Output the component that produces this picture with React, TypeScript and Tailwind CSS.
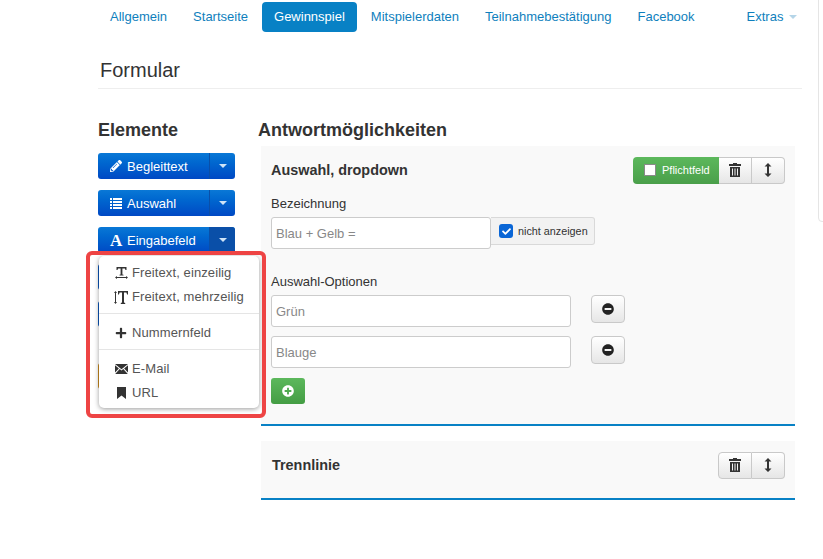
import React from 'react';
import { FaPencilAlt, FaPlus, FaMinusCircle, FaPlusCircle, FaCheck } from 'react-icons/fa';

const tabs = ['Allgemein', 'Startseite', 'Gewinnspiel', 'Mitspielerdaten', 'Teilnahmebestätigung', 'Facebook'];

const Caret = ({ className }: { className: string }) => (
  <span className={`inline-block w-0 h-0 border-x-[4px] border-x-transparent border-t-[4px] ${className}`} />
);

const TrashIcon = () => (
  <svg width="12" height="14" viewBox="0 0 12 14" fill="#333">
    <path d="M4 0h4v1h4v2H0V1h4z" />
    <path d="M1 4h10v10H1zM3 5.5v7h1v-7zM5.5 5.5v7h1v-7zM8 5.5v7h1v-7z" fillRule="evenodd" />
  </svg>
);

const ResizeIcon = () => (
  <svg width="8" height="14" viewBox="0 0 8 14" fill="#333">
    <path d="M4 0l3.5 3.6H5v6.8h2.5L4 14 .5 10.4H3V3.6H.5z" />
  </svg>
);

const MailIcon = () => (
  <svg width="13" height="10" viewBox="0 0 13 10" fill="#333">
    <path d="M0 0h13L6.5 5.2zM0 1.2l3.9 3.2L0 8.6zM13 1.2L9.1 4.4l3.9 4.2zM4.7 5l1.8 1.5L8.3 5l4.5 5H.2z" />
  </svg>
);

const BookmarkIcon = () => (
  <svg width="9" height="12" viewBox="0 0 9 12" fill="#333">
    <path d="M0 0h9v12L4.5 8.4 0 12z" />
  </svg>
);

const ListIcon = () => (
  <svg width="12" height="11" viewBox="0 0 12 11" fill="#fff">
    <path d="M0 0h2v2H0zM3 0h9v2H3zM0 3h2v2H0zM3 3h9v2H3zM0 6h2v2H0zM3 6h9v2H3zM0 9h2v2H0zM3 9h9v2H3z" />
  </svg>
);

const TextWidthIcon = () => (
  <svg width="13" height="12" viewBox="0 0 13 12" fill="#333">
    <path d="M1.5 0h10v3h-1l-.6-1.6H7.4v6l1.1.4V8.6h-4v-.8l1.1-.4v-6H3.1L2.5 3h-1z" />
    <path d="M0 10.5L2 9v1h9V9l2 1.5L11 12v-1H2v1z" />
  </svg>
);

const TextHeightIcon = () => (
  <svg width="14" height="13" viewBox="0 0 14 13" fill="#333">
    <path d="M1.5 0L3 2H2v9h1l-1.5 2L0 11h1V2H0z" />
    <path d="M4 0h10v3.4h-.9l-.7-2H10v10l1.2.5v1.1H6.8v-1.1L8 11.4v-10H5.6l-.7 2H4z" />
  </svg>
);

const SplitButton = ({ icon, label, dark }: { icon: React.ReactNode; label: string; dark?: boolean }) => (
  <div className="flex h-[26px] w-[137px] rounded-[3px] bg-gradient-to-b from-[#0a78d6] to-[#0048c4] text-white text-[13px]">
    <div className="flex flex-1 items-center pl-[12px] border-r border-[#0a4fa8]">
      <span className="flex w-[17px] shrink-0 items-center">{icon}</span>
      <span className="pt-[1px]">{label}</span>
    </div>
    <div className={`flex w-[25px] items-center justify-center rounded-r-[3px] ${dark ? 'bg-[#0a4fa8]' : ''}`}>
      <Caret className="border-t-[#cfe4f7]" />
    </div>
  </div>
);

const DefaultButton = ({ children, className }: { children: React.ReactNode; className: string }) => (
  <div className={`flex items-center justify-center bg-gradient-to-b from-white to-[#e6e6e6] border border-[#c9c9c9] ${className}`}>
    {children}
  </div>
);

const TextField = ({ value, className }: { value: string; className: string }) => (
  <div className={`flex items-center h-[32px] bg-white border border-[#cccccc] rounded-[3px] pl-[4px] pt-[1px] text-[13px] text-[#888888] ${className}`}>
    {value}
  </div>
);

const MenuItem = ({ icon, label }: { icon: React.ReactNode; label: string }) => (
  <div className="flex items-center h-[24px] text-[13px] tracking-[0.1px] text-[#555555]">
    <span className="ml-[15px] flex w-[14px] justify-center mr-[4px]">{icon}</span>
    <span>{label}</span>
  </div>
);

export default function App() {
  return (
    <div className="relative w-[823px] h-[559px] overflow-hidden bg-white text-[#333333] font-['Liberation_Sans',Arial,sans-serif]">
      {/* Tabs */}
      <nav className="flex gap-[2px] pl-[98px] pt-[2px] text-[13px] text-[#0f7fbd]">
        {tabs.map((tab) => (
          <div
            key={tab}
            className={`flex h-[30px] items-center px-[12px] rounded-[4px] ${tab === 'Gewinnspiel' ? 'bg-[#0881c5] text-white' : ''}`}
          >
            {tab}
          </div>
        ))}
        <div className="ml-[26px] flex h-[30px] items-center gap-[6px] px-[12px]">
          Extras
          <Caret className="border-t-[#b5d5e8]" />
        </div>
      </nav>

      <div className="ml-[98px] mr-[21px] mt-[26px] h-[31px] border-b border-[#eeeeee] pl-[2px] text-[20px] leading-[24px] text-[#333333]">
        Formular
      </div>

      <div className="flex pl-[98px] pt-[31px]">
        {/* Elemente */}
        <aside className="w-[137px] shrink-0">
          <h2 className="text-[18px] leading-[20px] font-bold">Elemente</h2>
          <div className="mt-[13px] flex flex-col gap-[11px]">
            <SplitButton icon={<FaPencilAlt size={12} />} label="Begleittext" />
            <SplitButton icon={<ListIcon />} label="Auswahl" />
            <SplitButton
              icon={<span className="font-['Liberation_Serif',serif] font-bold text-[17px] leading-none">A</span>}
              label="Eingabefeld"
              dark
            />
            <div className="h-[26px] rounded-[3px] bg-[#0a55b8]" />
            <div className="h-[26px] rounded-[3px] bg-[#0a55b8]" />
            <div className="mt-[25px] h-[26px] rounded-[3px] bg-[#c98a1e]" />
          </div>
        </aside>

        {/* Antwortmöglichkeiten */}
        <main className="ml-[23px] w-[537px]">
          <h2 className="text-[18px] leading-[20px] font-bold text-[#333333]">Antwortmöglichkeiten</h2>

          <section className="relative ml-[3px] mt-[6px] h-[280px] w-[534px] border-b-[2px] border-[#0881c5] bg-[#f9f9f9] pl-[10px] pt-[10px]">
            <div className="flex items-center justify-between h-[28px] pr-[10px]">
              <h3 className="pt-[2px] text-[14.4px] font-bold">Auswahl, dropdown</h3>
              <div className="flex h-[27px]">
                <div className="flex w-[86px] items-center gap-[6px] rounded-l-[4px] bg-gradient-to-b from-[#5cb85c] to-[#4a9f4a] pl-[11px] text-[11px] text-white">
                  <span className="h-[12px] w-[12px] bg-white border border-[#8a8a8a]" />
                  Pflichtfeld
                </div>
                <DefaultButton className="w-[33px] border-l-0">
                  <TrashIcon />
                </DefaultButton>
                <DefaultButton className="w-[33px] border-l-0 rounded-r-[4px]">
                  <ResizeIcon />
                </DefaultButton>
              </div>
            </div>

            <div className="mt-[11px] text-[13px] leading-[18px]">Bezeichnung</div>
            <div className="mt-[4px] flex items-start">
              <TextField value="Blau + Gelb =" className="w-[220px]" />
              <div className="flex h-[28px] w-[104px] items-center gap-[5px] rounded-r-[3px] border border-l-0 border-[#d9d9d9] bg-[#f2f2f2] pl-[8px] text-[10.8px]">
                <span className="flex h-[14px] w-[14px] items-center justify-center rounded-[3px] bg-[#0a66d6] text-white">
                  <FaCheck size={9} />
                </span>
                nicht anzeigen
              </div>
            </div>

            <div className="mt-[24px] text-[13px] leading-[18px]">Auswahl-Optionen</div>
            <div className="mt-[4px] flex items-start">
              <TextField value="Grün" className="w-[300px]" />
              <DefaultButton className="ml-[20px] h-[28px] w-[34px] rounded-[4px]">
                <FaMinusCircle size={12} color="#222222" />
              </DefaultButton>
            </div>
            <div className="mt-[9px] flex items-start">
              <TextField value="Blauge" className="w-[300px]" />
              <DefaultButton className="ml-[20px] h-[28px] w-[34px] rounded-[4px]">
                <FaMinusCircle size={12} color="#222222" />
              </DefaultButton>
            </div>
            <div className="mt-[10px] flex h-[26px] w-[34px] items-center justify-center rounded-[3px] bg-gradient-to-b from-[#5cb85c] to-[#449d44]">
              <FaPlusCircle size={12} color="#ffffff" />
            </div>
          </section>

          <section className="ml-[3px] mt-[15px] h-[59px] w-[534px] border-b-[2px] border-[#0881c5] bg-[#f9f9f9] pl-[11px] pr-[10px] pt-[10px]">
            <div className="flex items-center justify-between h-[28px]">
              <h3 className="pt-[2px] text-[14.4px] font-bold">Trennlinie</h3>
              <div className="flex h-[27px]">
                <DefaultButton className="w-[34px] rounded-l-[4px]">
                  <TrashIcon />
                </DefaultButton>
                <DefaultButton className="w-[33px] border-l-0 rounded-r-[4px]">
                  <ResizeIcon />
                </DefaultButton>
              </div>
            </div>
          </section>
        </main>
      </div>

      {/* Edge of a panel cut off on the right */}
      <div className="absolute right-[-10px] top-[-10px] h-[232px] w-[15px] rounded-[4px] border border-[#e5e5e5]" />

      {/* Open dropdown */}
      <div className="absolute left-[99px] top-[256px] h-[152px] w-[160px] rounded-[5px] bg-white pt-[5px] shadow-[0_1px_5px_rgba(0,0,0,0.4)]">
        <MenuItem icon={<TextWidthIcon />} label="Freitext, einzeilig" />
        <MenuItem icon={<TextHeightIcon />} label="Freitext, mehrzeilig" />
        <div className="mt-[4px] mb-[7px] h-px bg-[#e5e5e5]" />
        <MenuItem icon={<FaPlus size={12} color="#333333" />} label="Nummernfeld" />
        <div className="mt-[4px] mb-[7px] h-px bg-[#e5e5e5]" />
        <MenuItem icon={<MailIcon />} label="E-Mail" />
        <MenuItem icon={<BookmarkIcon />} label="URL" />
      </div>

      {/* Red highlight around the dropdown */}
      <div className="absolute left-[86px] top-[251px] h-[167px] w-[180px] rounded-[6px] border-[4px] border-[#ee4444]" />
    </div>
  );
}
